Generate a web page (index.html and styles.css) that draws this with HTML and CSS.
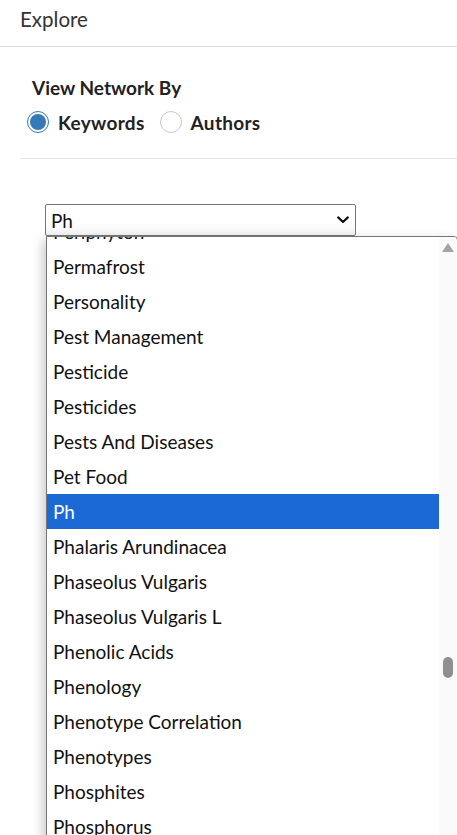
FILE: index.html
```html
<!DOCTYPE html>
<html>
<head>
<meta charset="utf-8">
<link rel="stylesheet" href="styles.css">
</head>
<body>
<div class="header">Explore</div>
<div class="panel">
  <div class="view-title">View Network By</div>
  <div class="radios">
    <label class="radio-item"><span class="radio checked"></span><span class="radio-label">Keywords</span></label>
    <label class="radio-item"><span class="radio"></span><span class="radio-label">Authors</span></label>
  </div>
  <div class="divider"></div>
  <div class="select-wrap">
    <div class="select">
      <span class="select-value">Ph</span>
      <svg class="chevron" width="12" height="8" viewBox="0 0 12 8"><path d="M1.2 1.4 L6 6 L10.8 1.4" fill="none" stroke="#111" stroke-width="2.2" stroke-linecap="round" stroke-linejoin="round"/></svg>
    </div>
    <div class="dropdown">
      <div class="options">
        <div class="list">
          <div class="opt">Periphyton</div>
          <div class="opt">Permafrost</div>
          <div class="opt">Personality</div>
          <div class="opt">Pest Management</div>
          <div class="opt">Pesticide</div>
          <div class="opt">Pesticides</div>
          <div class="opt">Pests And Diseases</div>
          <div class="opt">Pet Food</div>
          <div class="opt selected">Ph</div>
          <div class="opt">Phalaris Arundinacea</div>
          <div class="opt">Phaseolus Vulgaris</div>
          <div class="opt">Phaseolus Vulgaris L</div>
          <div class="opt">Phenolic Acids</div>
          <div class="opt">Phenology</div>
          <div class="opt">Phenotype Correlation</div>
          <div class="opt">Phenotypes</div>
          <div class="opt">Phosphites</div>
          <div class="opt">Phosphorus</div>
          <div class="opt">Photosynthesis</div>
        </div>
      </div>
      <div class="scrollbar">
        <div class="arrow-up"></div>
        <div class="thumb"></div>
      </div>
    </div>
  </div>
</div>
</body>
</html>
```
FILE: styles.css
```css
html, body {
  margin: 0;
  padding: 0;
  overflow: hidden;
  background: #fff;
}
body {
  width: 457px;
  height: 835px;
  font-family: "Lato", "Liberation Sans", sans-serif;
  color: #222;
  position: relative;
}
.header {
  height: 47px;
  box-sizing: border-box;
  padding: 7px 0 0 20px;
  font-size: 20.5px;
  color: #333;
  border-bottom: 1px solid #dedede;
}
.panel {
  padding: 0 0 0 20px;
}
.view-title {
  margin-top: 30px;
  padding-left: 12px;
  font-weight: bold;
  font-size: 19px;
  color: #222;
  line-height: 22px;
}
.radios {
  display: flex;
  align-items: center;
  margin-top: 11px;
  padding-left: 7px;
  height: 24px;
}
.radio-item {
  display: flex;
  align-items: center;
  margin-right: 15px;
}
.radio {
  width: 20px;
  height: 20px;
  border-radius: 50%;
  border: 1px solid #c8c8c8;
  box-sizing: content-box;
  display: flex;
  align-items: center;
  justify-content: center;
  background: #fff;
}
.radio.checked {
  border-color: #337ab7;
}
.radio.checked::after {
  content: "";
  width: 16px;
  height: 16px;
  border-radius: 50%;
  background: #337ab7;
}
.radio-label {
  margin-left: 9px;
  font-weight: bold;
  font-size: 19px;
  letter-spacing: 0.3px;
  color: #222;
}
.divider {
  margin-top: 24px;
  height: 1px;
  background: #e4e4e4;
}
.select-wrap {
  position: relative;
  margin-top: 45px;
  margin-left: 25px;
}
.select {
  width: 311px;
  height: 32px;
  box-sizing: border-box;
  border: 1px solid #767676;
  border-radius: 2px;
  background: linear-gradient(#fff 60%, #f4f4f4);
  display: flex;
  align-items: center;
  justify-content: space-between;
  padding: 0 6px 0 5px;
  font-size: 19px;
  color: #111;
}
.chevron {
  display: block;
}
.dropdown {
  position: absolute;
  top: 32px;
  left: 1px;
  width: 412px;
  height: 620px;
  box-sizing: border-box;
  border: 1px solid #767676;
  border-radius: 0 4px 0 0;
  background: #fff;
  box-shadow: -3px 4px 12px rgba(0,0,0,0.22);
  display: flex;
  overflow: hidden;
}
.options {
  flex: 1;
  overflow: hidden;
}
.list {
  margin-top: -23px;
}
.opt {
  height: 35px;
  line-height: 35px;
  padding-left: 6px;
  font-size: 19px;
  color: #111;
  white-space: nowrap;
}
.opt.selected {
  background: #1a69d4;
  color: #fff;
}
.scrollbar {
  width: 17px;
  flex: none;
  background: #fafafa;
  position: relative;
  margin-right: 1px;
}
.arrow-up {
  position: absolute;
  top: 6px;
  left: 3px;
  width: 0;
  height: 0;
  border-left: 6px solid transparent;
  border-right: 6px solid transparent;
  border-bottom: 9px solid #a3a3a3;
}
.thumb {
  position: absolute;
  top: 420px;
  left: 4px;
  width: 10px;
  height: 21px;
  border-radius: 5px;
  background: #8f8f8f;
}
```
